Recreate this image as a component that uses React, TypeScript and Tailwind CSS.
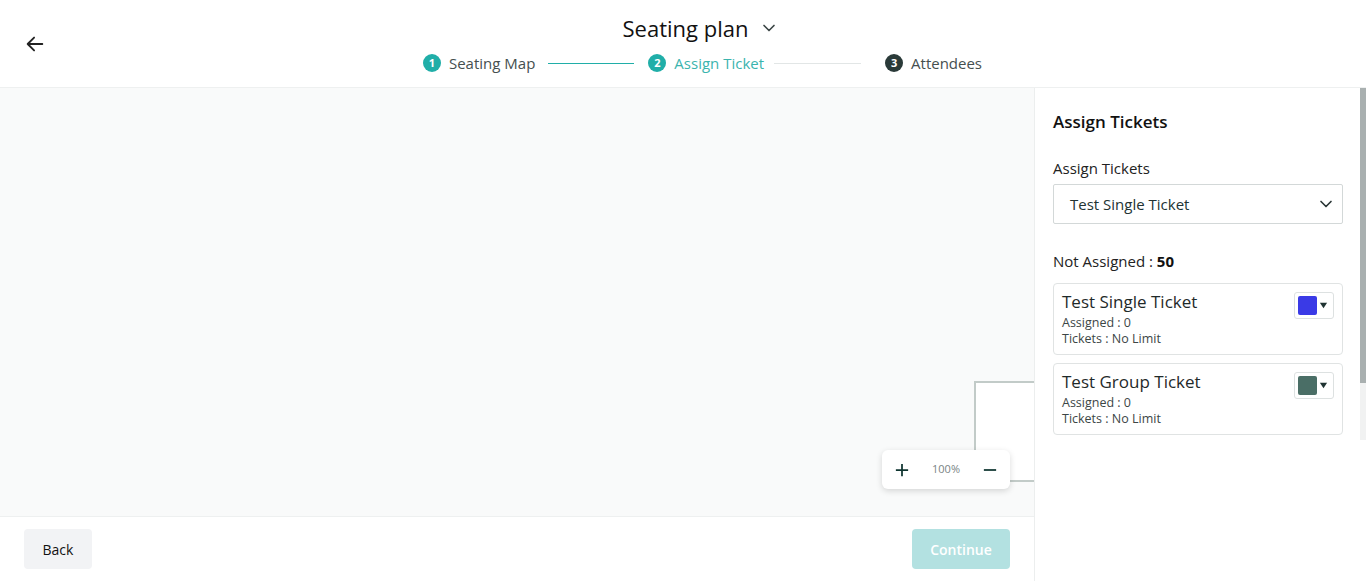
import React from "react";

const font = { fontFamily: '"Open Sans", "Noto Sans", sans-serif' };

function Chevron({ className = "" }: { className?: string }) {
  return (
    <svg viewBox="0 0 24 24" className={className} fill="none" stroke="currentColor" strokeWidth={2} strokeLinecap="round" strokeLinejoin="round">
      <path d="M6 9l6 6 6-6" />
    </svg>
  );
}

function Step({ n, label, circle, text }: { n: number; label: string; circle: string; text: string }) {
  return (
    <div className="flex items-center gap-2">
      <span className={`flex h-[18px] w-[18px] items-center justify-center rounded-full text-[11px] font-bold text-white ${circle}`}>{n}</span>
      <span className={`text-[15px] ${text}`}>{label}</span>
    </div>
  );
}

function TicketCard({ title, color }: { title: string; color: string }) {
  return (
    <div className="flex h-[72px] justify-between rounded-[4px] border border-[#e0e3e3] pl-[8px] pr-[8px] pt-[5px]">
      <div className="flex flex-col">
        <span className="text-[17px] leading-[26px] text-[#1f2a2a]">{title}</span>
        <span className="text-[12.5px] leading-[16px] text-[#3c4646]">Assigned : 0</span>
        <span className="text-[12.5px] leading-[16px] text-[#3c4646]">Tickets : No Limit</span>
      </div>
      <div className="mt-[3px] flex h-[27px] w-[40px] items-center gap-[2px] rounded-[3px] border border-[#dde1e1] pl-[3px]">
        <span className={`h-[19px] w-[19px] rounded-[2px] ${color}`} />
        <svg viewBox="0 0 10 10" className="h-[9px] w-[9px] text-[#1f3332]" fill="currentColor"><path d="M1 2h8L5 8z" /></svg>
      </div>
    </div>
  );
}

export default function App() {
  return (
    <div className="flex h-[581px] w-[1366px] flex-col overflow-hidden bg-white" style={font}>
      {/* Header */}
      <header className="relative flex h-[88px] shrink-0 flex-col items-center border-b border-[#eef0f0]">
        <button className="absolute left-[24px] top-[33px] text-[#222]">
          <svg viewBox="0 0 24 24" className="h-[22px] w-[22px]" fill="none" stroke="currentColor" strokeWidth={2} strokeLinecap="round" strokeLinejoin="round">
            <path d="M20 12H4M11 5l-7 7 7 7" />
          </svg>
        </button>
        <div className="mt-[13px] flex items-center gap-[11px] pl-[36px]">
          <span className="text-[22px] leading-[30px] text-[#111]">Seating plan</span>
          <Chevron className="h-[20px] w-[20px] text-[#3a4545]" />
        </div>
        <div className="mt-[9px] flex items-center pl-[39px]">
          <Step n={1} label="Seating Map" circle="bg-[#20aea8]" text="text-[#454f4f]" />
          <span className="ml-[13px] mr-[14px] h-[1px] w-[86px] bg-[#20aea8]" />
          <Step n={2} label="Assign Ticket" circle="bg-[#20aea8]" text="text-[#3bb4ae]" />
          <span className="ml-[10px] mr-[24px] h-[1px] w-[87px] bg-[#e2e6e6]" />
          <Step n={3} label="Attendees" circle="bg-[#2a3a39]" text="text-[#454f4f]" />
        </div>
      </header>

      <div className="flex min-h-0 flex-1">
        {/* Left: canvas + footer */}
        <div className="flex w-[1034px] shrink-0 flex-col">
          <div className="relative flex-1 overflow-hidden border-b border-[#eef0f0] bg-[#f9fafa]">
            <div className="absolute left-[974px] top-[293px] h-[101px] w-[120px] border-2 border-[#c2cbc8] bg-white" />
            <div className="absolute bottom-[27px] right-[24px] flex h-[39px] w-[128px] items-center justify-between rounded-[6px] bg-white px-[13px] shadow-[0_2px_6px_rgba(0,0,0,0.15)]">
              <svg viewBox="0 0 16 16" className="h-[14px] w-[14px] text-[#0f3530]" fill="none" stroke="currentColor" strokeWidth={2}><path d="M8 1v14M1 8h14" /></svg>
              <span className="text-[11px] text-[#7a8484]">100%</span>
              <svg viewBox="0 0 16 16" className="h-[14px] w-[14px] text-[#0f3530]" fill="none" stroke="currentColor" strokeWidth={2}><path d="M1 8h14" /></svg>
            </div>
          </div>
          <div className="flex h-[64px] shrink-0 items-center justify-between px-[24px]">
            <button className="flex h-[40px] w-[68px] items-center justify-center rounded-[4px] bg-[#f2f3f5] text-[14px] text-[#111]">Back</button>
            <button className="flex h-[40px] w-[98px] items-center justify-center rounded-[4px] bg-[#b3e1e1] text-[14px] font-semibold text-white">Continue</button>
          </div>
        </div>

        {/* Right panel */}
        <div className="flex flex-1 border-l border-[#eceeee]">
          <div className="flex flex-1 flex-col pl-[18px] pr-[17px] pt-[23px]">
            <h2 className="text-[17px] font-semibold leading-[22px] text-[#111]">Assign Tickets</h2>
            <label className="mt-[25px] text-[15px] leading-[20px] text-[#222]">Assign Tickets</label>
            <div className="mt-[6px] flex h-[40px] items-center justify-between rounded-[2px] border border-[#d3d8d8] pl-[16px] pr-[6px]">
              <span className="text-[15px] text-[#233]">Test Single Ticket</span>
              <Chevron className="h-[20px] w-[20px] text-[#2a3636]" />
            </div>
            <div className="mt-[27px] text-[15px] leading-[20px] text-[#222]">
              Not Assigned : <span className="font-bold text-[#111]">50</span>
            </div>
            <div className="mt-[12px] flex flex-col gap-[8px]">
              <TicketCard title="Test Single Ticket" color="bg-[#3a3ae6]" />
              <TicketCard title="Test Group Ticket" color="bg-[#4a6e66]" />
            </div>
          </div>
          <div className="flex w-[6px] flex-col">
            <div className="h-[295px] bg-[#a9b0b0]" />
            <div className="h-[57px] bg-[#f1f2f2]" />
          </div>
        </div>
      </div>
    </div>
  );
}
